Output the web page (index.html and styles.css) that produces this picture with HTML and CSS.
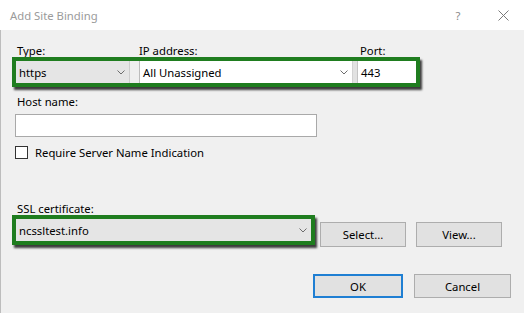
FILE: index.html
```html
<!DOCTYPE html>
<html>
<head>
<meta charset="utf-8">
<link rel="stylesheet" href="styles.css">
</head>
<body>
<div class="titlebar">
  <div class="title">Add Site Binding</div>
  <div class="tb-help">?</div>
  <div class="tb-close">
    <svg width="11" height="11" viewBox="0 0 11 11"><path d="M0.5 0.5 L10.5 10.5 M10.5 0.5 L0.5 10.5" stroke="#7a7a7a" stroke-width="1" fill="none"/></svg>
  </div>
</div>
<div class="main">
  <div class="labels">
    <div class="lbl-type">Type:</div>
    <div class="lbl-ip">IP address:</div>
    <div class="lbl-port">Port:</div>
  </div>
  <div class="hl hl1">
    <div class="combo combo-gray combo-type"><span class="val">https</span><svg class="chev" width="8" height="5" viewBox="0 0 8 5"><polyline points="0.5,0.5 4,4 7.5,0.5" fill="none" stroke="#6d6d6d" stroke-width="1"/></svg></div>
    <div class="sep1"></div>
    <div class="combo combo-white combo-ip"><span class="val">All Unassigned</span><svg class="chev" width="8" height="5" viewBox="0 0 8 5"><polyline points="0.5,0.5 4,4 7.5,0.5" fill="none" stroke="#6d6d6d" stroke-width="1"/></svg></div>
    <div class="sep2"></div>
    <div class="port"><span class="val">443</span></div>
  </div>

  <div class="lbl-host">Host name:</div>
  <div class="host-input"></div>

  <div class="check-row">
    <div class="checkbox"></div>
    <div class="check-lbl">Require Server Name Indication</div>
  </div>

  <div class="lbl-ssl">SSL certificate:</div>
  <div class="row2">
    <div class="hl hl2">
      <div class="combo combo-gray combo-ssl"><span class="val">ncssltest.info</span><svg class="chev" width="8" height="5" viewBox="0 0 8 5"><polyline points="0.5,0.5 4,4 7.5,0.5" fill="none" stroke="#6d6d6d" stroke-width="1"/></svg></div>
    </div>
    <div class="btn btn-select">Select...</div>
    <div class="btn btn-view">View...</div>
  </div>

  <div class="footer">
    <div class="btn btn-ok">OK</div>
    <div class="btn btn-cancel">Cancel</div>
  </div>
</div>
</body>
</html>
```
FILE: styles.css
```css
html, body {
  margin: 0;
  padding: 0;
}
body {
  width: 524px;
  height: 313px;
  overflow: hidden;
  background: #f0f0f0;
  font-family: "Noto Sans", "Open Sans", sans-serif;
  font-size: 11.3px;
  color: #000;
}
.titlebar {
  height: 30px;
  background: #fff;
  display: flex;
  align-items: center;
  padding-left: 10px;
  color: #9b9b9b;
}
.title {
  flex: 1;
}
.tb-help {
  width: 50px;
  text-align: center;
  color: #8a8a8a;
}
.tb-close {
  width: 41px;
  display: flex;
  justify-content: center;
  align-items: center;
}
.main {
  height: 283px;
  box-shadow: inset 1px 0 0 #bdbdbd;
}
.labels {
  display: flex;
  padding-top: 13px;
  padding-left: 17px;
  height: 14px;
  line-height: 15px;
}
.lbl-type { width: 122px; }
.lbl-ip { width: 221px; }
.hl {
  border: 4px solid #1f7d1f;
  box-shadow: 2px 3px 2px rgba(0, 0, 0, 0.75);
  position: relative;
}
.hl1 {
  margin-left: 12px;
  width: 400px;
  height: 22px;
  display: flex;
}
.combo {
  height: 22px;
  display: flex;
  align-items: center;
  box-sizing: border-box;
  padding-left: 3px;
}
.combo .val {
  flex: 1;
}
.chev {
  margin-right: 4px;
}
.combo-gray {
  background: #e5e5e5;
}
.combo-white {
  background: #fff;
}
.combo-type {
  width: 114px;
  border-right: 1px solid #cdcdcd;
}
.sep1 {
  width: 10px;
  background: #efefef;
  box-sizing: border-box;
  border-right: 1px solid #bcbcbc;
}
.combo-ip {
  width: 212px;
  padding-left: 3px;
}
.sep2 {
  width: 6px;
  background: #e2e2e2;
  box-sizing: border-box;
  border-left: 1px solid #d2d2d2;
  border-right: 1px solid #c4c4c4;
}
.port {
  width: 58px;
  background: #fff;
  display: flex;
  align-items: center;
  padding-left: 3px;
  box-sizing: border-box;
}
.lbl-host {
  margin-top: 7px;
  padding-left: 17px;
  line-height: 15px;
  height: 15px;
}
.host-input {
  margin-top: 5px;
  margin-left: 15px;
  width: 302px;
  height: 23px;
  box-sizing: border-box;
  background: #fff;
  border: 1px solid #a9a9a9;
}
.check-row {
  margin-top: 9px;
  height: 13px;
  display: flex;
  align-items: center;
}
.checkbox {
  margin-left: 15px;
  width: 13px;
  height: 13px;
  box-sizing: border-box;
  border: 1px solid #333;
  background: #fff;
}
.check-lbl {
  margin-left: 7px;
  line-height: 15px;
}
.lbl-ssl {
  margin-top: 42px;
  padding-left: 17px;
  line-height: 15px;
  height: 14px;
}
.row2 {
  display: flex;
  align-items: flex-start;
}
.hl2 {
  margin-left: 12px;
  width: 295px;
  height: 22px;
}
.combo-ssl {
  width: 295px;
}
.btn {
  height: 25px;
  box-sizing: border-box;
  border: 1px solid #adadad;
  background: #e1e1e1;
  display: flex;
  align-items: center;
  justify-content: center;
}
.btn-select {
  margin-left: 5px;
  margin-top: 7px;
  width: 86px;
}
.btn-view {
  margin-left: 10px;
  margin-top: 7px;
  width: 86px;
}
.footer {
  display: flex;
  justify-content: flex-end;
  padding-right: 13px;
  margin-top: 27px;
}
.footer .btn {
  height: 24px;
}
.btn-ok {
  width: 90px;
  border: 2px solid #1f7fd3;
}
.btn-cancel {
  width: 97px;
  margin-left: 11px;
}
```
